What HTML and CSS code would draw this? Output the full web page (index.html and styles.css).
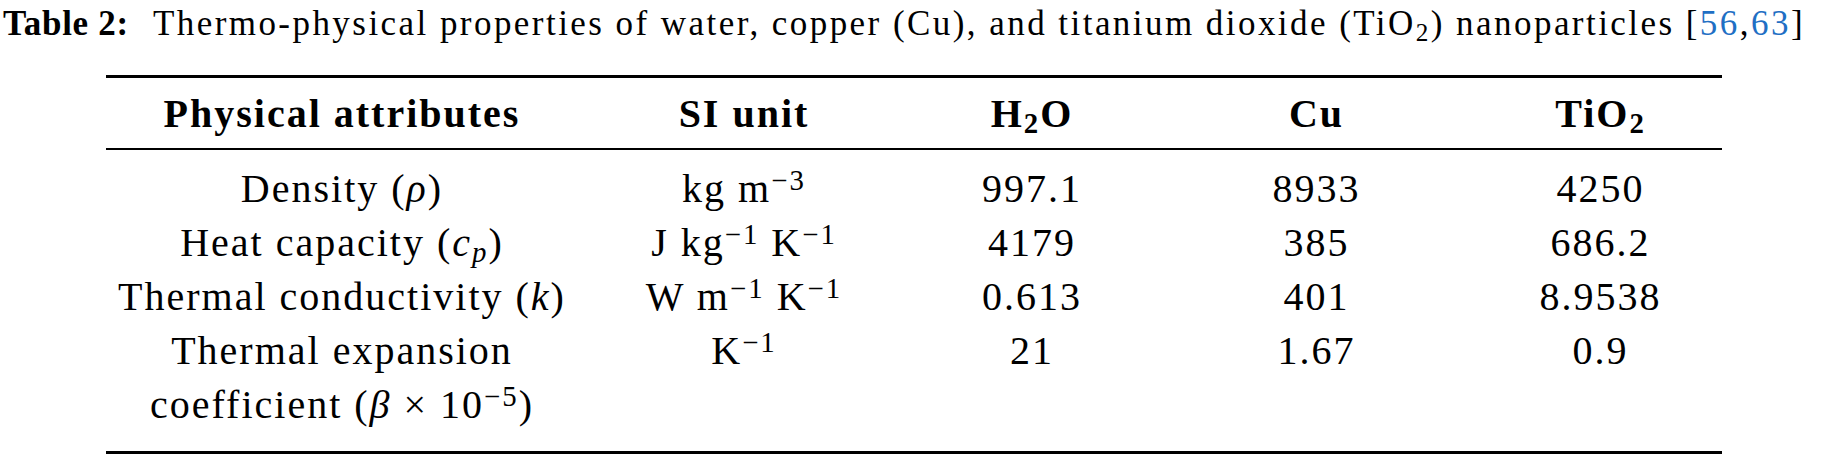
FILE: index.html
```html
<!DOCTYPE html>
<html lang="en">

<head>
    <meta charset="UTF-8">
    <meta name="viewport" content="width=device-width, initial-scale=1.0">
    <title>Table 2</title>
    <link rel="stylesheet" href="styles.css">
</head>

<body>
    <p class="caption"><b class="caption-label">Table 2:</b>Thermo-physical properties of water, copper (Cu), and titanium dioxide (TiO<sub>2</sub>) nanoparticles [<a href="#" class="ref">56</a>,<a href="#" class="ref">63</a>]</p>

    <table class="props">
        <colgroup>
            <col class="col-attr">
            <col class="col-unit">
            <col class="col-water">
            <col class="col-cu">
            <col class="col-tio">
        </colgroup>
        <thead>
            <tr>
                <th>Physical attributes</th>
                <th>SI unit</th>
                <th>H<sub>2</sub>O</th>
                <th>Cu</th>
                <th>TiO<sub>2</sub></th>
            </tr>
        </thead>
        <tbody>
            <tr>
                <td>Density (<i>ρ</i>)</td>
                <td>kg m<sup>−3</sup></td>
                <td>997.1</td>
                <td>8933</td>
                <td>4250</td>
            </tr>
            <tr>
                <td>Heat capacity (<i>c<sub>p</sub></i>)</td>
                <td>J kg<sup>−1</sup> K<sup>−1</sup></td>
                <td>4179</td>
                <td>385</td>
                <td>686.2</td>
            </tr>
            <tr>
                <td>Thermal conductivity (<i>k</i>)</td>
                <td>W m<sup>−1</sup> K<sup>−1</sup></td>
                <td>0.613</td>
                <td>401</td>
                <td>8.9538</td>
            </tr>
            <tr>
                <td>Thermal expansion<br>coefficient (<i>β</i> × 10<sup>−5</sup>)</td>
                <td>K<sup>−1</sup></td>
                <td>21</td>
                <td>1.67</td>
                <td>0.9</td>
            </tr>
        </tbody>
    </table>
</body>

</html>
```

FILE: styles.css
```css
* {
    box-sizing: border-box;
    margin: 0;
    padding: 0;
}
body {
    font-family: "Liberation Serif", "Times New Roman", serif;
    color: #000;
    background-color: #fff;
}

sub,
sup {
    font-size: 0.72em;
    line-height: 0;
}
sup {
    vertical-align: 0.4em;
}
sub {
    vertical-align: -0.22em;
}

/* caption */
.caption {
    font-size: 35px;
    line-height: 48px;
    letter-spacing: 0.07em;
    white-space: nowrap;
    padding-left: 3px;
}
.caption-label {
    margin-right: 24px;
    letter-spacing: 0.02em;
}
.ref {
    color: #1f6fc4;
    text-decoration: none;
}

/* table */
.props {
    width: 1616px;
    margin: 27px auto 0;
    border-collapse: separate;
    border-spacing: 0;
    table-layout: fixed;
    border-top: 3px solid #000;
    border-bottom: 3px solid #000;
    font-size: 40px;
    line-height: 54px;
    letter-spacing: 0.05em;
}
.col-attr { width: 472px; }
.col-unit { width: 332px; }
.col-water { width: 244px; }
.col-cu { width: 325px; }
.col-tio { width: 243px; }

.props th,
.props td {
    text-align: center;
    vertical-align: top;
    white-space: nowrap;
}
.props th {
    font-weight: bold;
    padding: 9px 0 7px;
    border-bottom: 2px solid #000;
}
.props tbody tr:first-child td {
    padding-top: 12px;
}
.props tbody tr:last-child td {
    padding-bottom: 19px;
}
```
